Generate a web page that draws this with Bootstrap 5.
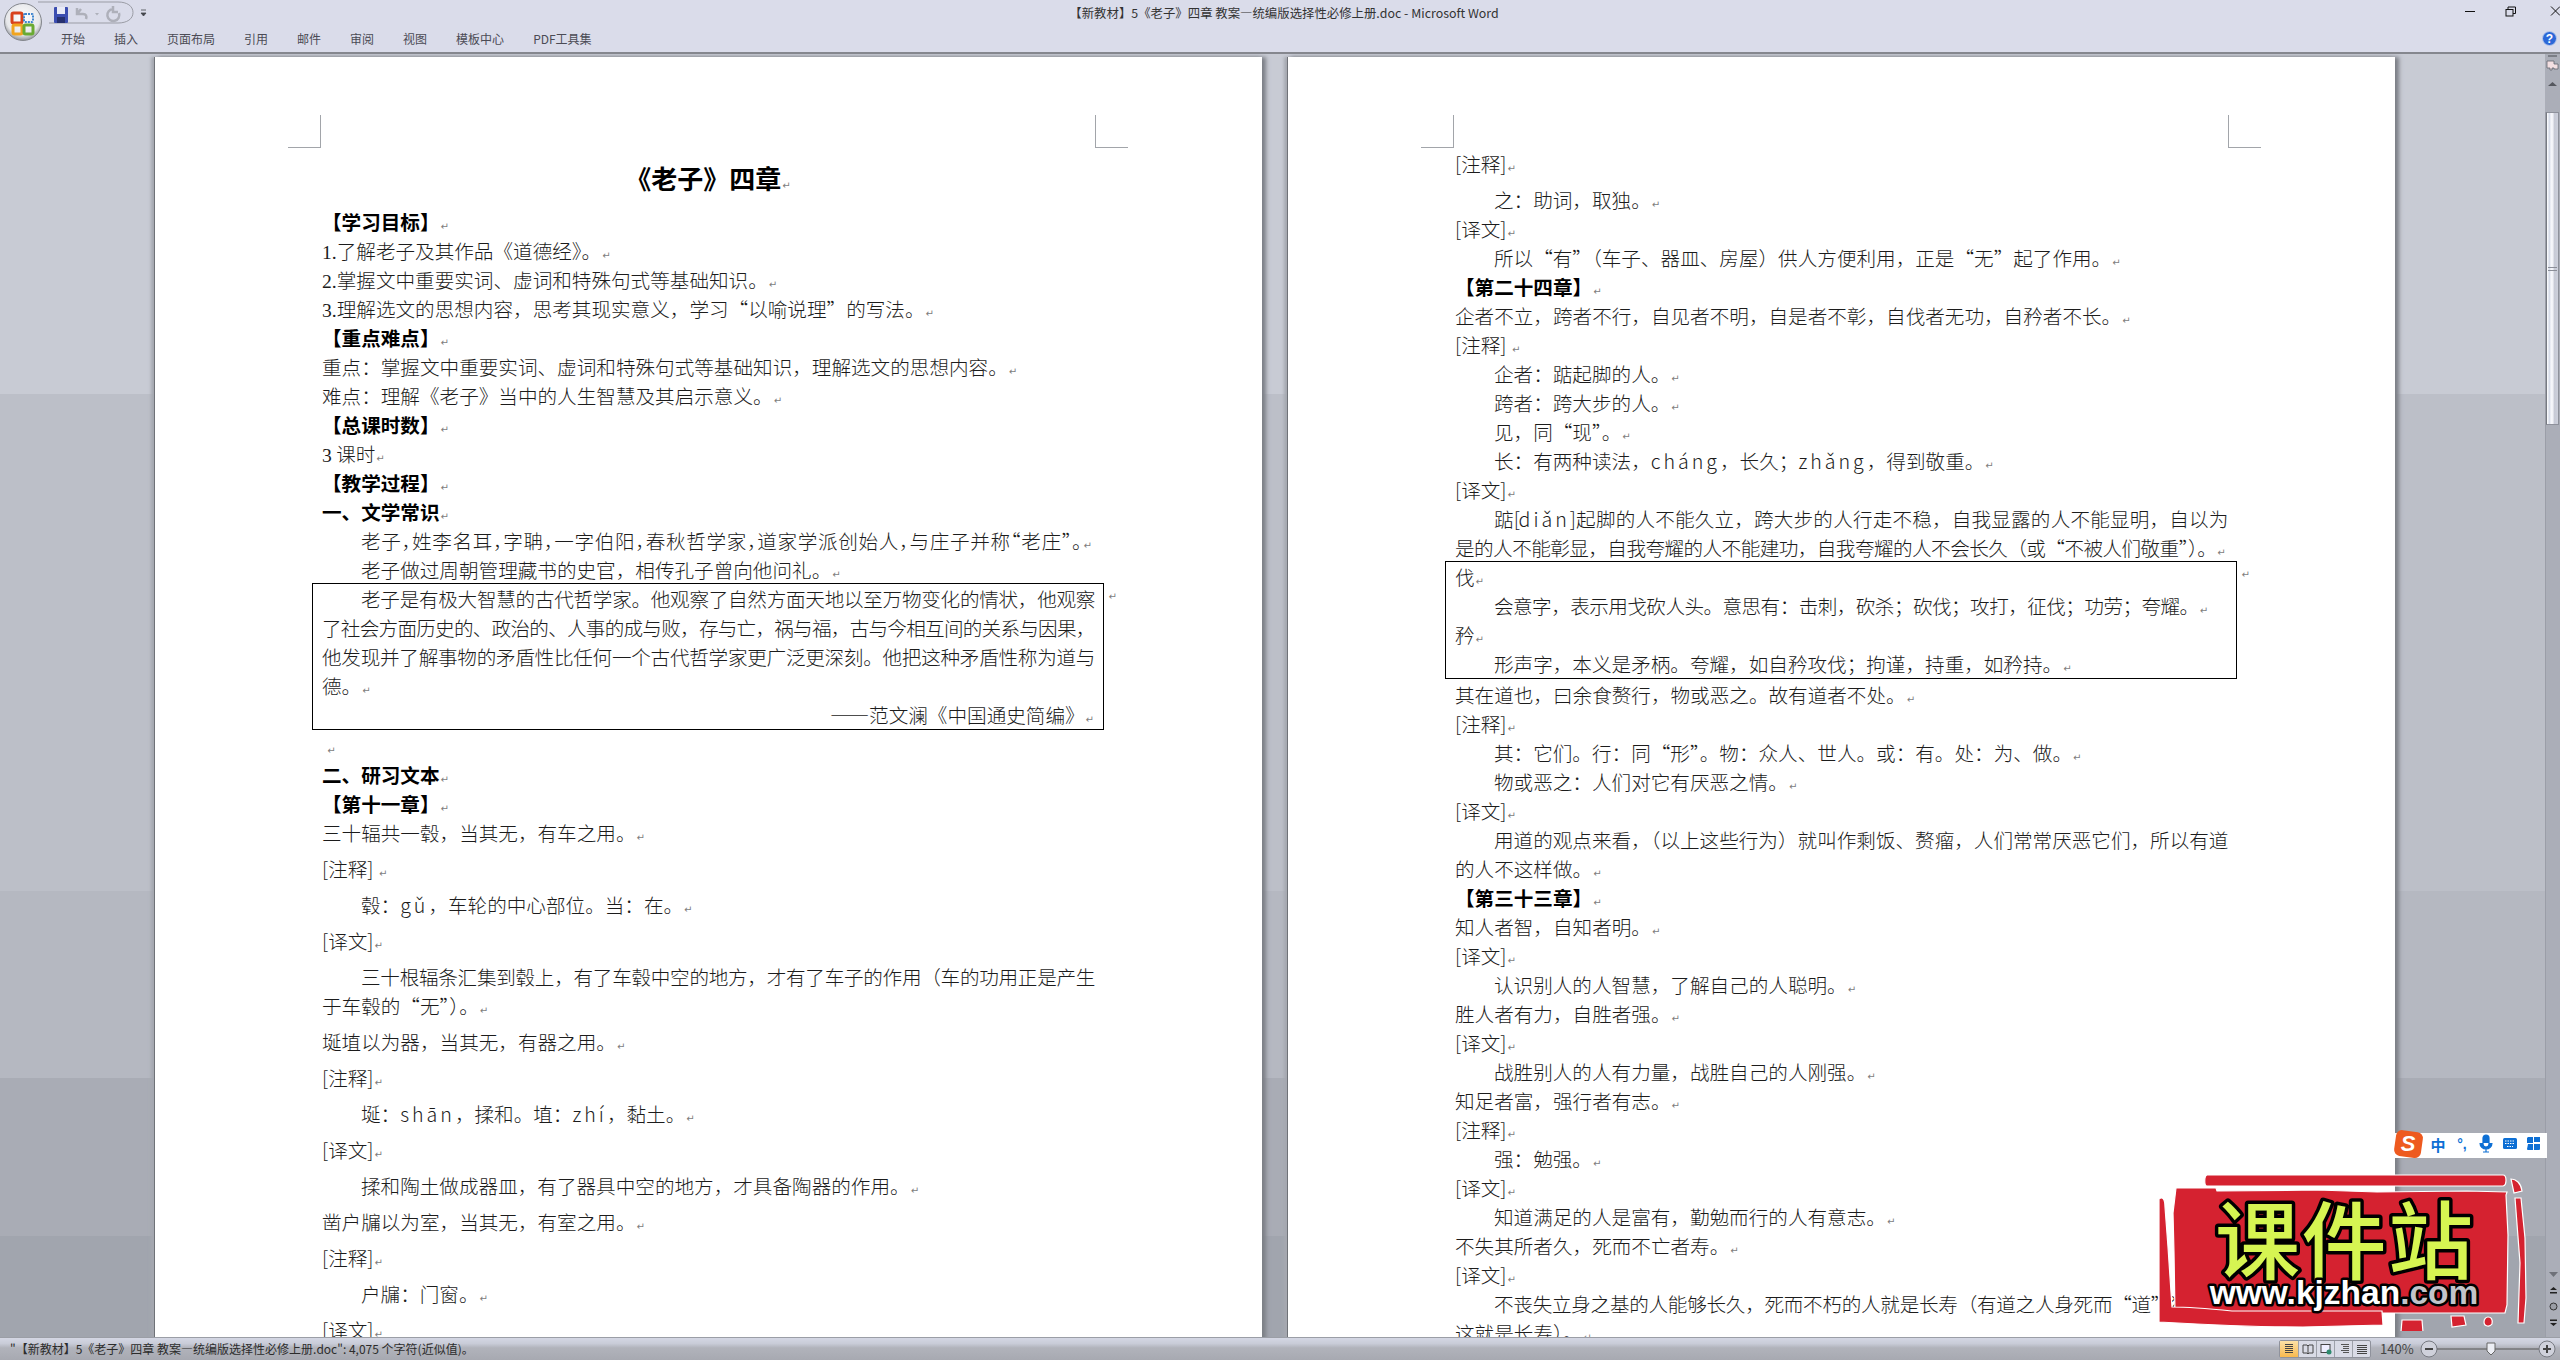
<!DOCTYPE html>
<html lang="zh-CN">

<head>
  <meta charset="UTF-8" />
  <title>【新教材】5《老子》四章 教案—统编版选择性必修上册.doc - Microsoft Word</title>
  <link href="https://cdn.jsdelivr.net/npm/bootstrap@5.3.3/dist/css/bootstrap.min.css" rel="stylesheet">
  <style>
    html, body { height: 100%; overflow: hidden; }
    body { font-family: "Noto Sans CJK SC", "Liberation Sans", sans-serif; background: #c9ccd4; color: #222; }

    .word-ribbon { height: 54px; background: #dadcea; border-bottom: 2px solid #85878e; flex: none; }
    .word-title { height: 26px; line-height: 26px; font-size: 12.4px; color: #333; padding-left: 8px; white-space: nowrap; }
    .word-side { flex: 1 1 0; }
    .word-tabs { padding-left: 61px; gap: 29px; height: 26px; align-items: center; }
    .word-tabs .nav-link { padding: 0; font-size: 12px; line-height: 16px; color: #4b4b55; }
    .ribbon-art { left: 0; top: 0; }
    .help-dot { right: 3px; top: 31px; }

    .word-work { min-height: 0; background: linear-gradient(#c8cbd4 340px, #bcbfc8 340px, #bcbfc8 837px, #b5b8c1 837px, #b5b8c1 1024px, #a9acb5 1024px, #a9acb5 1182px, #a1a5ae 1182px); }
    .word-pages { padding: 3px 0 0 154px; gap: 25px; min-width: 0; }
    .doc-sheet { width: 1108px; height: 1320px; flex: none; background: #fff; border-left: 1px solid #6f7278; box-shadow: 4px 0 4px #7c7f86, -3px 0 3px #a6a9b1; }
    .doc-left { padding: 99px 168px 0 167px; }
    .doc-right { padding: 92px 168px 0 167px; }
    .corner-mark { position: absolute; top: 58px; width: 33px; height: 33px; border-bottom: 1px solid #a2a5aa; }
    .corner-l { left: 133px; border-right: 1px solid #a2a5aa; }
    .corner-r { right: 134px; border-left: 1px solid #a2a5aa; }

    .doc-line { margin: 0; font-size: 19.6px; line-height: 29px; font-weight: 300; text-align: justify; color: #1c1c1c; }
    .doc-line::after, .doc-title::after { content: "\21B5"; font-family: "DejaVu Sans", sans-serif; font-size: 10px; line-height: 0; font-weight: 400; letter-spacing: 0; color: #7d7d7d; margin-left: 1px; }
    .doc-title { margin: 0 0 7px; font-size: 26px; line-height: 44px; font-weight: 700; text-align: center; color: #000; }
    .doc-strong { font-weight: 700; color: #000; }
    .doc-indent { text-indent: 39px; }
    .doc-spaced { margin-top: 7px; }
    .doc-num { font-family: "Liberation Serif", serif; font-weight: 400; line-height: 0; }
    .doc-py { letter-spacing: 3px; }
    .doc-tight { font-feature-settings: "halt"; letter-spacing: .65px; white-space: nowrap; }
    .doc-tight2 { letter-spacing: -.55px; white-space: nowrap; }
    .fit-line { display: block; white-space: nowrap; letter-spacing: -1.4px; text-align: justify; text-align-last: justify; }
    .fit-first { padding-left: 39px; }
    .doc-box { margin: -1px -10px 1px -10px; padding: 0 9px 0 9px; border: 1px solid #000; border-width: 1px 1px 1.5px 1px; }
    .doc-right .doc-box { margin: -1px -10px 1px -10px; }
    .box-mark { right: -14px; top: 5px; font-family: "DejaVu Sans", sans-serif; font-size: 10px; color: #7d7d7d; }
    .doc-box .doc-end { text-align: right; }

    .word-scroll { width: 15px; flex: none; background: #abaeb8; border-left: 1px solid #9b9ea8; font-size: 10px; color: #444; }
    .scroll-top { height: 58px; margin-left: -1px; background: #abaeb8; }
    .scroll-thumb { height: 313px; margin-right: 1px; background: linear-gradient(90deg, #fff 0, #d6dbe8 22%, #f6f7fb 38%, #f0f1f6 55%, #c6c9d5 65%, #cdd0db 100%); border: 1px solid #8e919b; border-left-color: #777a82; }
    .scroll-grip { width: 9px; height: 4px; border-top: 1px solid #8b8e98; border-bottom: 1px solid #8b8e98; margin-top: 154px; }
    .scroll-btn { height: 16px; line-height: 16px; text-align: center; }

    .word-status { height: 23px; flex: none; border-top: 1px solid #9b9ea6; background: linear-gradient(#d4d7e4 0, #c9ccd8 25%, #b1b3bb 45%, #a7a9b1 100%); font-size: 12px; color: #2c2c2c; padding-left: 10px; line-height: 20px; }
    .status-views { border: 1px solid #8f929c; border-radius: 2px; height: 18px; background: #d9dbe6; }
    .status-views span { width: 18px; display: flex; align-items: center; justify-content: center; border-left: 1px solid #9ea1aa; }
    .status-views span:first-child { border-left: 0; background: linear-gradient(#fde1a6, #f8b94f); }
    .status-zoom { font-size: 13px; color: #444; width: 40px; margin-left: 9px; }

    .ime-bar { right: 13px; bottom: 202px; width: 154px; height: 25px; background: #fff; }
    .ime-art { overflow: visible; margin-top: -5px; display: block; }
    .stamp-art { right: 30px; bottom: 29px; }
  </style>
</head>

<body>
  <div class="d-flex flex-column vh-100 position-relative overflow-hidden">
    <div class="word-ribbon position-relative">
      <div class="d-flex">
        <div class="word-side"></div>
        <div class="word-title">【新教材】5《老子》四章 教案—统编版选择性必修上册.doc - Microsoft Word</div>
        <div class="word-side d-flex justify-content-end">
          <svg width="120" height="26" viewBox="0 0 120 26" fill="none" stroke="#111" stroke-width="1">
            <path d="M25 11.5h10" />
            <rect x="66" y="9.5" width="7" height="6.5" />
            <path d="M68 9.5v-2.500h7.500v6.500h-2.500" />
            <path d="M111 6.500l9 9M120 6.500l-9 9" />
          </svg>
        </div>
      </div>
      <ul class="nav word-tabs">
        <li class="nav-item"><a class="nav-link" href="#">开始</a></li>
        <li class="nav-item"><a class="nav-link" href="#">插入</a></li>
        <li class="nav-item"><a class="nav-link" href="#">页面布局</a></li>
        <li class="nav-item"><a class="nav-link" href="#">引用</a></li>
        <li class="nav-item"><a class="nav-link" href="#">邮件</a></li>
        <li class="nav-item"><a class="nav-link" href="#">审阅</a></li>
        <li class="nav-item"><a class="nav-link" href="#">视图</a></li>
        <li class="nav-item"><a class="nav-link" href="#">模板中心</a></li>
        <li class="nav-item"><a class="nav-link" href="#">PDF工具集</a></li>
      </ul>

      <!-- office button + quick access bar -->
      <svg class="ribbon-art position-absolute" width="152" height="48" viewBox="0 0 152 48">
        <defs>
          <radialGradient id="orb" cx="50%" cy="40%" r="60%">
            <stop offset="0" stop-color="#ffffff" />
            <stop offset=".75" stop-color="#e6e7ea" />
            <stop offset="1" stop-color="#8f9298" />
          </radialGradient>
        </defs>
        <path d="M38 2h80c9 0 15 4 15 10.500s-6 10.500-15 10.500H49" fill="none" stroke="#9a9ca5" stroke-width="1" />
        <circle cx="23" cy="22" r="18.500" fill="url(#orb)" stroke="#84878d" />
        <rect x="12" y="13" width="10" height="10" rx="1.500" fill="none" stroke="#d8411c" stroke-width="3" />
        <rect x="24" y="14" width="9" height="8" rx="1" fill="none" stroke="#3f86cf" stroke-width="2" stroke-dasharray="2 1" />
        <rect x="13" y="25" width="9" height="9" rx="1.500" fill="none" stroke="#f1a41e" stroke-width="3" />
        <rect x="24" y="25" width="9" height="9" rx="1.500" fill="none" stroke="#6aaa33" stroke-width="3" />
        <rect x="54" y="7" width="14" height="16" rx="1" fill="#3b4db0" />
        <rect x="57" y="7" width="8" height="7" fill="#e8eaf6" />
        <rect x="57" y="17" width="8" height="6" fill="#26306f" />
        <path d="M77 8v6h6c3 0 4 2 3 5M77 14l4-5" fill="none" stroke="#aeb0ba" stroke-width="2.500" />
        <path d="M95 13h4l-2 2.500z" fill="#aeb0ba" />
        <path d="M113 9a6 6 0 1 0 6 4M113 6v6h5" fill="none" stroke="#aeb0ba" stroke-width="2.500" />
        <path d="M141 10h5M141 13h5l-2.500 3z" fill="#44464d" stroke="#44464d" stroke-width=".8" />
      </svg>
      <svg class="help-dot position-absolute" width="15" height="15" viewBox="0 0 15 15">
        <circle cx="7.500" cy="7.500" r="7" fill="#2c68d8" stroke="#b9c9ea" />
        <text x="7.500" y="12" font-size="12" font-weight="700" text-anchor="middle" fill="#fff" font-family="Liberation Sans">?</text>
      </svg>
    </div>

    <div class="word-work d-flex flex-grow-1 overflow-hidden">
      <div class="word-pages d-flex flex-grow-1">
        <div class="doc-sheet doc-left position-relative">
          <span class="corner-mark corner-l"></span><span class="corner-mark corner-r"></span>
          <h1 class="doc-title">《老子》四章</h1>
          <p class="doc-line doc-strong">【学习目标】</p>
          <p class="doc-line"><span class="doc-num">1.</span>了解老子及其作品《道德经》。</p>
          <p class="doc-line"><span class="doc-num">2.</span>掌握文中重要实词、虚词和特殊句式等基础知识。</p>
          <p class="doc-line"><span class="doc-num">3.</span>理解选文的思想内容，思考其现实意义，学习“以喻说理”的写法。</p>
          <p class="doc-line doc-strong">【重点难点】</p>
          <p class="doc-line">重点：掌握文中重要实词、虚词和特殊句式等基础知识，理解选文的思想内容。</p>
          <p class="doc-line">难点：理解《老子》当中的人生智慧及其启示意义。</p>
          <p class="doc-line doc-strong">【总课时数】</p>
          <p class="doc-line"><span class="doc-num">3</span> 课时</p>
          <p class="doc-line doc-strong">【教学过程】</p>
          <p class="doc-line doc-strong">一、文学常识</p>
          <p class="doc-line doc-indent doc-tight">老子，姓李名耳，字聃，一字伯阳，春秋哲学家，道家学派创始人，与庄子并称“老庄”。</p>
          <p class="doc-line doc-indent">老子做过周朝管理藏书的史官，相传孔子曾向他问礼。</p>
          <div class="doc-box position-relative">
            <span class="box-mark position-absolute">&#8629;</span>
            <p class="doc-line"><span class="fit-line fit-first">老子是有极大智慧的古代哲学家。他观察了自然方面天地以至万物变化的情状，他观察</span><span class="fit-line">了社会方面历史的、政治的、人事的成与败，存与亡，祸与福，古与今相互间的关系与因果，</span><span class="fit-line">他发现并了解事物的矛盾性比任何一个古代哲学家更广泛更深刻。他把这种矛盾性称为道与</span>德。</p>
            <p class="doc-line doc-end">——范文澜《中国通史简编》</p>
          </div>
          <p class="doc-line">&nbsp;</p>
          <p class="doc-line doc-strong">二、研习文本</p>
          <p class="doc-line doc-strong">【第十一章】</p>
          <p class="doc-line">三十辐共一毂，当其无，有车之用。</p>
          <p class="doc-line doc-spaced">[注释] </p>
          <p class="doc-line doc-indent doc-spaced">毂：<span class="doc-py">gǔ</span>，车轮的中心部位。当：在。</p>
          <p class="doc-line doc-spaced">[译文]</p>
          <p class="doc-line doc-spaced"><span class="fit-line fit-first">三十根辐条汇集到毂上，有了车毂中空的地方，才有了车子的作用（车的功用正是产生</span>于车毂的“无”）。</p>
          <p class="doc-line doc-spaced">埏埴以为器，当其无，有器之用。</p>
          <p class="doc-line doc-spaced">[注释]</p>
          <p class="doc-line doc-indent doc-spaced">埏：<span class="doc-py">shān</span>，揉和。埴：<span class="doc-py">zhí</span>，黏土。</p>
          <p class="doc-line doc-spaced">[译文]</p>
          <p class="doc-line doc-indent doc-spaced">揉和陶土做成器皿，有了器具中空的地方，才具备陶器的作用。</p>
          <p class="doc-line doc-spaced">凿户牖以为室，当其无，有室之用。</p>
          <p class="doc-line doc-spaced">[注释]</p>
          <p class="doc-line doc-indent doc-spaced">户牖：门窗。</p>
          <p class="doc-line doc-spaced">[译文]</p>
        </div>

        <div class="doc-sheet doc-right position-relative">
          <span class="corner-mark corner-l"></span><span class="corner-mark corner-r"></span>
          <p class="doc-line">[注释]</p>
          <p class="doc-line doc-indent doc-spaced">之：助词，取独。</p>
          <p class="doc-line">[译文]</p>
          <p class="doc-line doc-indent">所以“有”（车子、器皿、房屋）供人方便利用，正是“无”起了作用。</p>
          <p class="doc-line doc-strong">【第二十四章】</p>
          <p class="doc-line">企者不立，跨者不行，自见者不明，自是者不彰，自伐者无功，自矜者不长。</p>
          <p class="doc-line">[注释] </p>
          <p class="doc-line doc-indent">企者：踮起脚的人。</p>
          <p class="doc-line doc-indent">跨者：跨大步的人。</p>
          <p class="doc-line doc-indent">见，同“现”。</p>
          <p class="doc-line doc-indent">长：有两种读法，<span class="doc-py">cháng</span>，长久；<span class="doc-py">zhǎng</span>，得到敬重。</p>
          <p class="doc-line">[译文]</p>
          <p class="doc-line"><span class="fit-line fit-first">踮[<span class="doc-py">diǎn</span>]起脚的人不能久立，跨大步的人行走不稳，自我显露的人不能显明，自以为</span><span class="doc-tight2">是的人不能彰显，自我夸耀的人不能建功，自我夸耀的人不会长久（或“不被人们敬重”）。</span></p>
          <div class="doc-box position-relative">
            <span class="box-mark position-absolute">&#8629;</span>
            <p class="doc-line">伐</p>
            <p class="doc-line doc-indent doc-tight2">会意字，表示用戈砍人头。意思有：击刺，砍杀；砍伐；攻打，征伐；功劳；夸耀。</p>
            <p class="doc-line">矜</p>
            <p class="doc-line doc-indent">形声字，本义是矛柄。夸耀，如自矜攻伐；拘谨，持重，如矜持。</p>
          </div>
          <p class="doc-line">其在道也，曰余食赘行，物或恶之。故有道者不处。</p>
          <p class="doc-line">[注释]</p>
          <p class="doc-line doc-indent">其：它们。行：同“形”。物：众人、世人。或：有。处：为、做。</p>
          <p class="doc-line doc-indent">物或恶之：人们对它有厌恶之情。</p>
          <p class="doc-line">[译文]</p>
          <p class="doc-line"><span class="fit-line fit-first">用道的观点来看，（以上这些行为）就叫作剩饭、赘瘤，人们常常厌恶它们，所以有道</span>的人不这样做。</p>
          <p class="doc-line doc-strong">【第三十三章】</p>
          <p class="doc-line">知人者智，自知者明。</p>
          <p class="doc-line">[译文]</p>
          <p class="doc-line doc-indent">认识别人的人智慧，了解自己的人聪明。</p>
          <p class="doc-line">胜人者有力，自胜者强。</p>
          <p class="doc-line">[译文]</p>
          <p class="doc-line doc-indent">战胜别人的人有力量，战胜自己的人刚强。</p>
          <p class="doc-line">知足者富，强行者有志。</p>
          <p class="doc-line">[注释]</p>
          <p class="doc-line doc-indent">强：勉强。</p>
          <p class="doc-line">[译文]</p>
          <p class="doc-line doc-indent">知道满足的人是富有，勤勉而行的人有意志。</p>
          <p class="doc-line">不失其所者久，死而不亡者寿。</p>
          <p class="doc-line">[译文]</p>
          <p class="doc-line"><span class="fit-line fit-first">不丧失立身之基的人能够长久，死而不朽的人就是长寿（有道之人身死而“道”犹存，</span>这就是长寿）。</p>
        </div>
      </div>

      <div class="word-scroll d-flex flex-column">
        <div class="scroll-top">
          <svg class="d-block" width="15" height="58" viewBox="0 0 15 58">
            <rect x="3" y="1" width="9" height="2" fill="#7b7e86" />
            <path d="M2 7h7v3h4v5h-4v-1h-2v2h-2v-2h-3z" fill="#f3dfe2" stroke="#63666e" stroke-width=".8" />
            <path d="M3 32l4.500-4 4.500 4z" fill="#55585f" />
          </svg>
        </div>
        <div class="scroll-thumb d-flex justify-content-center">
          <div class="scroll-grip"></div>
        </div>
        <div class="flex-grow-1"></div>
        <div class="scroll-btn">
          <svg width="11" height="7" viewBox="0 0 11 7"><path d="M1 1h9l-4.500 5z" fill="#6e7179" /></svg>
        </div>
        <div class="scroll-btn">
          <svg width="9" height="9" viewBox="0 0 9 9"><path d="M1 4l3.500-3 3.500 3zM1 6h7v1.500h-7z" fill="#222" /></svg>
        </div>
        <div class="scroll-btn">
          <svg width="9" height="9" viewBox="0 0 9 9"><circle cx="4.500" cy="4.500" r="3.500" fill="#9a9da5" stroke="#333" /></svg>
        </div>
        <div class="scroll-btn mb-2">
          <svg width="9" height="9" viewBox="0 0 9 9"><path d="M1 1.500h7v1.500h-7zM1 5l3.500 3 3.500-3z" fill="#222" /></svg>
        </div>
      </div>
    </div>

    <div class="word-status d-flex align-items-center">
      <div class="flex-grow-1">"【新教材】5《老子》四章 教案—统编版选择性必修上册.doc": 4,075 个字符(近似值)。</div>
      <div class="status-views d-flex">
        <span><svg width="12" height="12" viewBox="0 0 12 12" stroke="#444"><path d="M2 1.500h8M2 3.500h8M2 5.500h8M2 7.500h8M2 9.500h8" /></svg></span>
        <span><svg width="12" height="12" viewBox="0 0 12 12" fill="none" stroke="#444"><path d="M1 2h4l1 1 1-1h4v8h-4l-1 1-1-1h-4zM6 3v8" /></svg></span>
        <span><svg width="12" height="12" viewBox="0 0 12 12"><rect x="1" y="1.500" width="9" height="8" fill="#eef" stroke="#444" /><circle cx="9" cy="9" r="2.500" fill="#2e8a6e" /></svg></span>
        <span><svg width="12" height="12" viewBox="0 0 12 12" stroke="#555"><path d="M3 1.500h8M5 3.500h6M5 5.500h6M3 7.500h8M5 9.500h6" /></svg></span>
        <span><svg width="12" height="12" viewBox="0 0 12 12" stroke="#444"><path d="M1 2.500h10M1 4.500h10M1 6.500h10M1 8.500h10M1 10.500h10" /></svg></span>
      </div>
      <div class="status-zoom">140%</div>
      <svg class="me-1" width="136" height="20" viewBox="0 0 136 20">
        <circle cx="9" cy="10" r="8" fill="#cfd1db" stroke="#777a82" />
        <path d="M5 10h8" stroke="#444" stroke-width="2" />
        <path d="M17 10h110" stroke="#555" />
        <path d="M67 4h8v8l-4 4-4-4z" fill="#eceef4" stroke="#666" />
        <circle cx="127" cy="10" r="8" fill="#cfd1db" stroke="#777a82" />
        <path d="M123 10h8M127 6v8" stroke="#444" stroke-width="2" />
      </svg>
    </div>

    <!-- sogou IME bar -->
    <div class="ime-bar position-absolute">
      <svg class="ime-art" width="154" height="32" viewBox="0 0 154 32">
        <rect x="2" y="3" width="27" height="26" rx="6" fill="#ee5a1f" transform="rotate(8 15 16)" />
        <text x="15" y="23" text-anchor="middle" font-size="22" font-weight="700" font-style="italic" fill="#fff" font-family="Liberation Sans">S</text>
        <text x="45" y="23" text-anchor="middle" font-size="15" font-weight="700" fill="#0d6fd4">中</text>
        <text x="69" y="21" text-anchor="middle" font-size="14" font-weight="700" fill="#0d6fd4" font-family="Liberation Sans">°,</text>
        <path d="M90 10a3 3 0 0 1 6 0v6a3 3 0 0 1-6 0zM87 15a6 6 0 0 0 12 0M93 21v3M90 24h6" fill="#0d6fd4" stroke="#0d6fd4" stroke-width="1.200" fill-rule="evenodd" />
        <rect x="110" y="10" width="14" height="11" rx="1.500" fill="#0d6fd4" />
        <path d="M112 13h10M112 15.500h10M114 18.500h6" stroke="#fff" stroke-dasharray="1.500 1" />
        <path d="M135 9h5v6h-6v-5zM142 9h5v5h-6v-5zM135 16h5v6h-5a1 1 0 0 1-1-1zM141 16h6v5a1 1 0 0 1-1 1h-5z" fill="#0d6fd4" />
      </svg>
    </div>

    <!-- kjzhan stamp -->
    <svg class="stamp-art position-absolute" width="372" height="157" viewBox="0 0 372 157">
      <g fill="#d52230" stroke="#fff" stroke-width="1.200">
        <path d="M49 1h296c4 0 4 10 0 11H49c-3 0-3-10 0-11z" />
        <path d="M18 14l40 0 1 3 100-1 60 2 90-1 40 1-1 3 2 40-1 70-2 8-330 0-1-60-1-40z" />
        <path d="M1 25c4-3 6 1 6 8l3 40 4 60c20 0 40 2 60 4l150 0 1 14-80 2c-50 0-90-2-144-5z" />
        <path d="M244 146l20 0 1 12-22 0zM293 142l13 0 2 9-14 2z" />
        <path d="M330 143c3 0 5 2 4 7-2 3-8 3-8-2 0-3 2-5 4-5z" />
        <path d="M353 5c5 0 10 4 11 12l-8 2zM357 24l6 0 4 40 1 60-2 25-6 0 2-60z" />
      </g>
      <text x="186" y="99" text-anchor="middle" font-size="85" font-weight="500" font-family="Noto Sans CJK SC" fill="#d6f552" stroke="#000" stroke-width="7" paint-order="stroke" stroke-linejoin="round" textLength="258">课件站</text>
      <text x="186" y="130" text-anchor="middle" font-size="33.500" font-weight="700" font-family="Liberation Sans" fill="#fff" stroke="#000" stroke-width="5" paint-order="stroke" stroke-linejoin="round">www.kjzhan<tspan fill="#c2c4ca">.com</tspan></text>
    </svg>
  </div>

  <script src="https://cdn.jsdelivr.net/npm/bootstrap@5.3.3/dist/js/bootstrap.bundle.min.js"></script>
</body>

</html>
